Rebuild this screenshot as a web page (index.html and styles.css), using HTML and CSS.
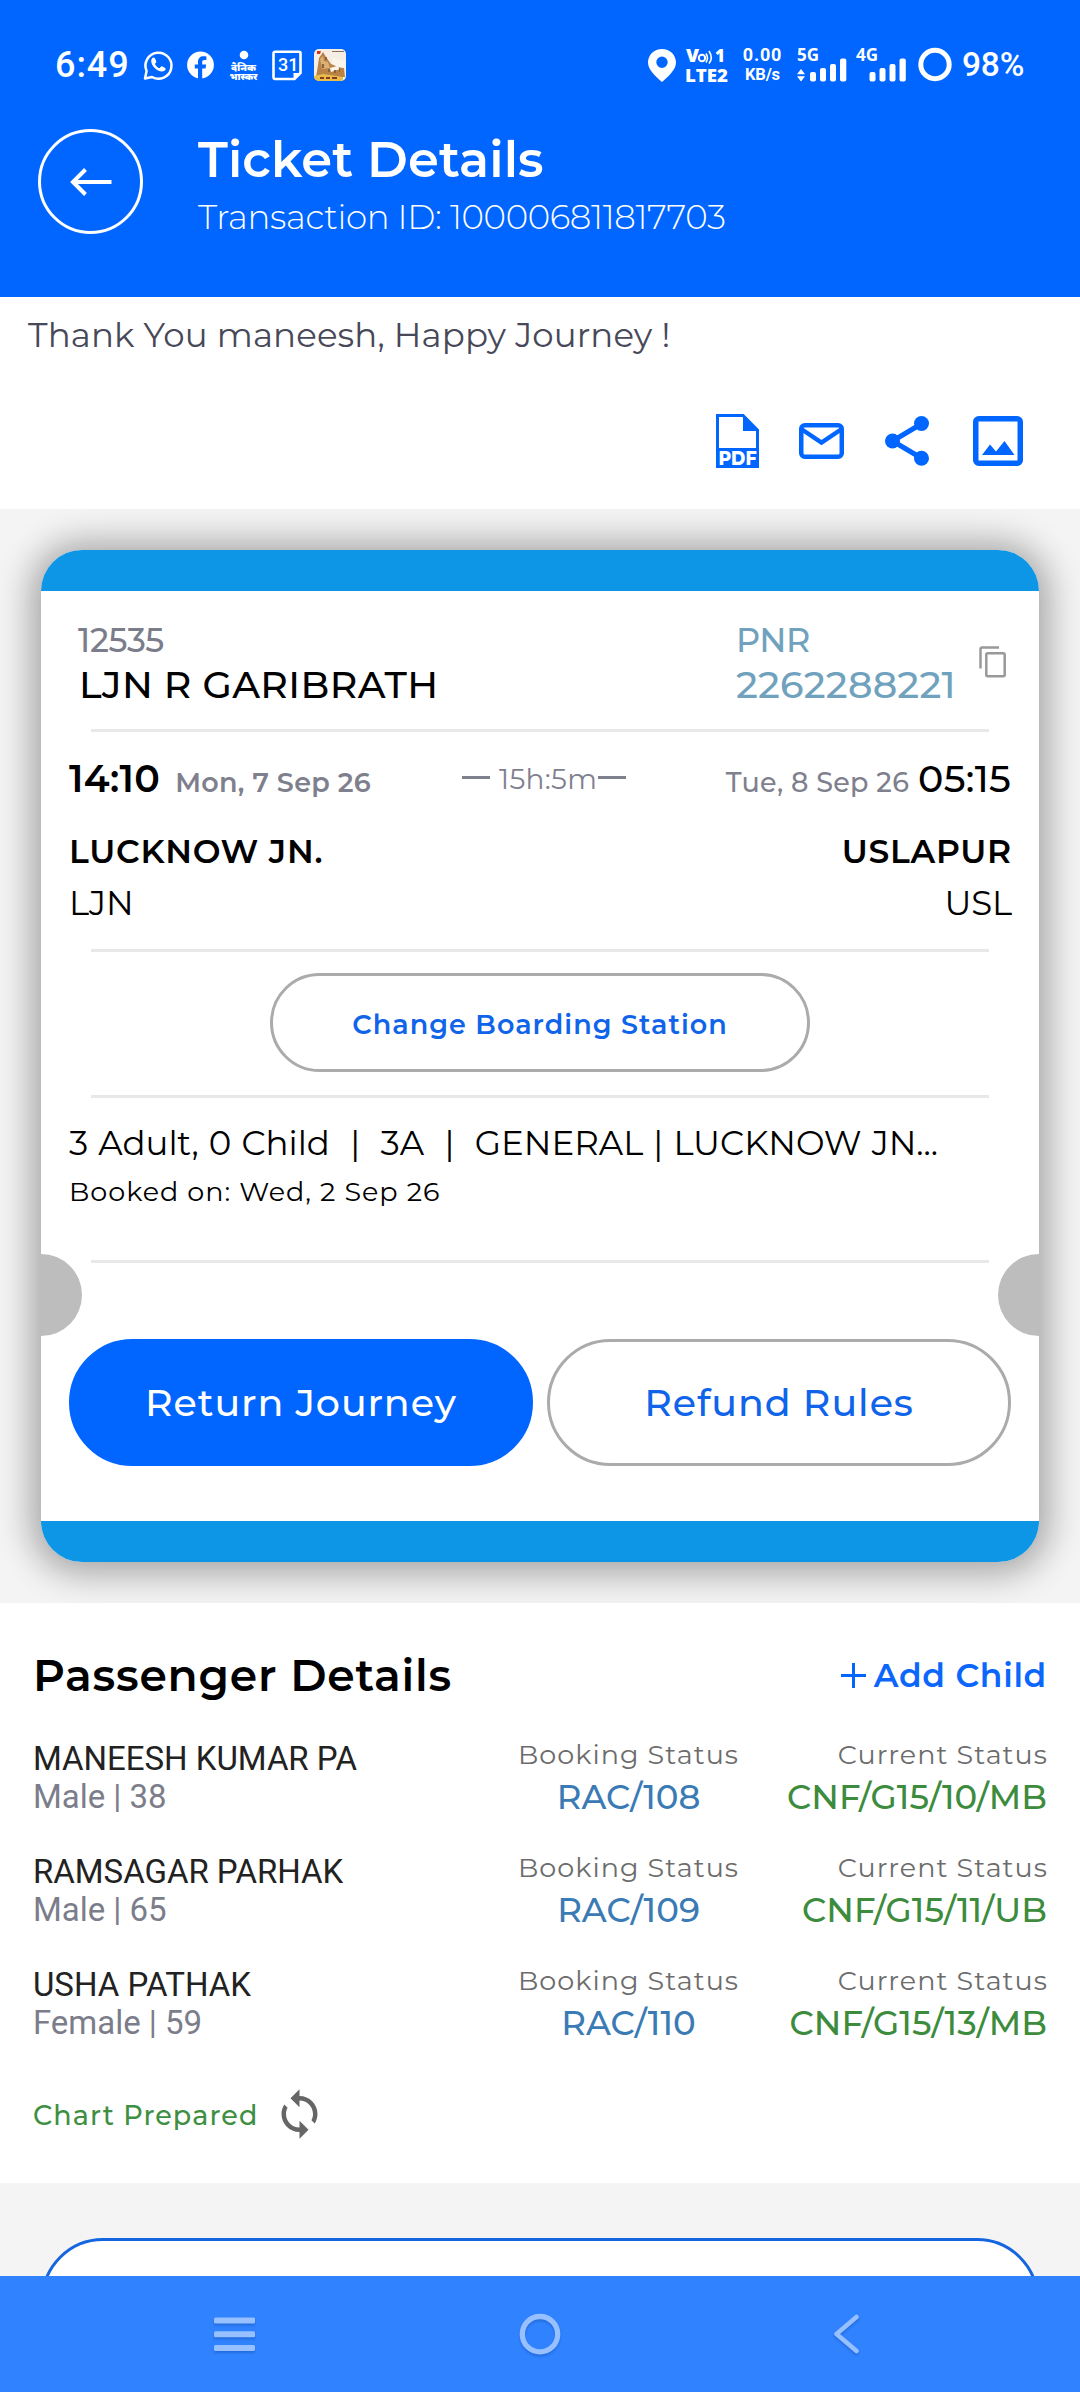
FILE: index.html
```
<!DOCTYPE html>
<html lang="en">
<head>
<meta charset="utf-8">
<title>Ticket Details</title>
<link rel="stylesheet" href="styles.css">
</head>
<body>
<div class="screen">
  <header class="header">
    <div class="status">
      <div class="status-left">
        <span class="clock">6:49</span>
        <svg class="s-wa" width="30" height="34" viewBox="0 0 30 34"><path d="M2 30.500 3.600 23A13 13 0 1 1 9 29Z" fill="none" stroke="#fff" stroke-width="2.500" stroke-linejoin="round"/><path d="M10.600 9.500c-1 0-2.400 1.400-2.400 3.500 0 4.800 6 10.600 10.600 10.600 2.300 0 3.900-1.300 3.900-2.800 0-.8-3.600-2.800-4.300-2.600-.8.300-1.200 1.900-2 1.900-1.200 0-4.400-3.200-4.400-4.200 0-.7 1.300-1.200 1.300-2 0-.8-1.200-4.400-2.700-4.400Z" fill="#fff"/></svg>
        <svg class="s-fb" width="27" height="34" viewBox="0 0 27 34"><circle cx="13.500" cy="17" r="13.400" fill="#fff"/><path d="M11 31V20.500H7.800v-4H11v-2.600c0-3.900 2.200-5.700 5.400-5.700 1.200 0 2.300.1 3 .3v3.400h-2c-1.700 0-2.200.9-2.200 2.200v2.400h4l-.7 4h-3.300V31Z" fill="#0066ff"/></svg>
        <svg class="s-news" width="29" height="36" viewBox="0 0 29 36"><circle cx="15" cy="7" r="4.300" fill="#fff"/><text class="news-text" x="2" y="23" textLength="25" lengthAdjust="spacingAndGlyphs">दैनिक</text><text class="news-text" x="0.500" y="32" textLength="28" lengthAdjust="spacingAndGlyphs">भास्कर</text></svg>
        <svg class="s-cal" width="30" height="34" viewBox="0 0 30 34"><path d="M3 3.700h24a1.500 1.500 0 0 1 1.500 1.500V25l-6 6H3a1.500 1.500 0 0 1-1.500-1.500V5.200A1.500 1.500 0 0 1 3 3.700Z" fill="none" stroke="#fff" stroke-width="2.600"/><path d="M21.500 31v-6h7Z" fill="#fff"/><text class="cal-text" x="6" y="23">31</text></svg>
        <svg class="s-pic" width="32" height="34" viewBox="0 0 32 34"><clipPath id="thumb"><rect y="1" width="32" height="32" rx="5"/></clipPath><g clip-path="url(#thumb)"><path fill="#f6eee4" d="M0 0h32v34H0z"/><path fill="#b98247" d="m5 10 4-6 3 5 5 7 5 2 8 2 1 9H2l2-12Z"/><path fill="#d9b078" d="m6 11 3-3 1 5 4 1 2 6-8 1Z"/><path fill="#fbf4ea" d="m19 10 12 3v7l-8-1-5-4ZM16 20l7-2 3 3-9 3Z"/><path fill="#cf3421" d="M3 3h4L6 6H3Z"/><path fill="#8b6138" d="M11 9h2v3h-2zM8 16h2v4H8zM14 21h2v3h-2zM25 20h1v4h-1zM20 22h2v3h-2z"/><path fill="#e9bd4c" d="M0 28l9-2 20 3v5H0z"/><path fill="#8a3a1c" d="M6 29h4v2H6zM12 29h4v2h-4zM18 29h5v2h-5z"/><path stroke="#8a705c" d="M18 3.500h12"/></g></svg>
      </div>
      <div class="status-right">
        <svg class="s-pin" width="28" height="34" viewBox="0 0 28 34"><path fill="#fff" fill-rule="evenodd" d="M14 1C6.300 1 0 6.800 0 14.500 0 22 8 28.500 14 34c6-5.500 14-12 14-19.500C28 6.800 21.700 1 14 1Zm0 7.500a5.700 5.700 0 1 1 0 11.400 5.700 5.700 0 0 1 0-11.400Z"/></svg>
        <svg class="s-volte" width="43" height="40" viewBox="0 0 43 40"><text class="tiny heavy" x="1" y="14" textLength="13" lengthAdjust="spacingAndGlyphs">V</text><circle cx="17" cy="10" r="3.200" fill="none" stroke="#fff" stroke-width="2"/><path d="M21 5.500q3 4.500 0 9M24 3q4.500 7 0 12.500" fill="none" stroke="#fff" stroke-width="1.600"/><text class="tiny heavy" x="30" y="14">1</text><text class="tiny heavy" x="0" y="34" textLength="43" lengthAdjust="spacingAndGlyphs">LTE2</text></svg>
        <div class="speed"><span class="speed-num">0.00</span><span class="speed-unit">KB/s</span></div>
        <svg class="s-sig" width="51" height="34" viewBox="0 0 51 34"><text class="tiny" x="0" y="13" textLength="22" lengthAdjust="spacingAndGlyphs">5G</text><path fill="#fff" d="M0 26.300h8L4 21ZM0 28.200h8L4 33.500Z"/><rect x="13" y="24" width="6" height="9.500" rx="2" fill="#fff"/><rect x="23" y="20" width="6" height="13.500" rx="2" fill="#fff"/><rect x="33" y="16" width="6" height="17.500" rx="2" fill="#fff"/><rect x="43" y="10.500" width="6.300" height="23" rx="2" fill="#fff"/></svg>
        <svg class="s-sig2" width="51" height="34" viewBox="0 0 51 34"><text class="tiny" x="0" y="13" textLength="22" lengthAdjust="spacingAndGlyphs">4G</text><rect x="13.500" y="24" width="6" height="9.500" rx="2" fill="#fff"/><rect x="23.500" y="20" width="6" height="13.500" rx="2" fill="#fff"/><rect x="33.500" y="16" width="6" height="17.500" rx="2" fill="#fff"/><rect x="43.500" y="10.500" width="6.300" height="23" rx="2" fill="#fff"/></svg>
        <svg class="s-ring" width="34" height="34" viewBox="0 0 34 34"><circle cx="17" cy="16.500" r="14.200" fill="none" stroke="#fff" stroke-width="5"/></svg>
        <span class="battery">98%</span>
      </div>
    </div>
    <div class="title-row">
      <button class="back" aria-label="Back"><svg width="42" height="28" viewBox="0 0 42 28"><path d="M15.500 1.500 3 14l12.500 12.500M3 14h38.500" fill="none" stroke="#fff" stroke-width="4"/></svg></button>
      <div class="titles">
        <h1 class="title">Ticket Details</h1>
        <p class="txn">Transaction ID: 100006811817703</p>
      </div>
    </div>
  </header>

  <section class="greeting">
    <p class="thanks">Thank You maneesh, Happy Journey !</p>
    <div class="actions">
      <svg class="a-pdf" width="43" height="54" viewBox="0 0 43 54"><path d="M1.500 53V1.500h25.500L41.500 16v37" fill="none" stroke="#0066ff" stroke-width="3"/><path fill="#0066ff" d="M27 0v17h16ZM0 34h43v20H0z"/><text class="pdf-text" x="2.500" y="50.500" textLength="38" lengthAdjust="spacingAndGlyphs">PDF</text></svg>
      <svg class="a-mail" width="45" height="36" viewBox="0 0 45 36"><rect x="2.250" y="2.250" width="40.500" height="31.500" rx="3.500" fill="none" stroke="#0066ff" stroke-width="4.500"/><path d="m3 6.500 19.500 13 19.500-13" fill="none" stroke="#0066ff" stroke-width="4.500"/></svg>
      <svg class="a-share" width="44" height="50" viewBox="0 0 44 50"><path d="M37 7.500 7.500 25 37 42.500" fill="none" stroke="#0066ff" stroke-width="5"/><g fill="#0066ff"><circle cx="36.500" cy="7.500" r="7.500"/><circle cx="7.500" cy="25" r="7.500"/><circle cx="36.500" cy="42.300" r="7.500"/></g></svg>
      <svg class="a-image" width="50" height="50" viewBox="0 0 50 50"><rect x="2.750" y="2.750" width="44.500" height="44.500" rx="3" fill="none" stroke="#0066ff" stroke-width="5.500"/><path fill="#0066ff" d="m9 39 8-10.500 6 7 8.500-10.500L41.500 39Z"/></svg>
    </div>
  </section>

  <section class="ticket-wrap">
    <article class="ticket">
      <div class="strip strip-top"></div>
      <div class="ticket-body">
        <div class="train">
          <div class="train-name"><span class="no">12535</span><span class="name">LJN R GARIBRATH</span></div>
          <div class="pnr"><span class="pnr-label">PNR</span><span class="pnr-no">2262288221</span></div>
          <svg class="copy" width="27" height="32" viewBox="0 0 27 32"><path d="M1.500 22.500V3a1.500 1.500 0 0 1 1.500-1.500h17" fill="none" stroke="#999" stroke-width="2.500"/><rect x="7.300" y="7.300" width="18.400" height="23" rx="1.500" fill="none" stroke="#999" stroke-width="2.500"/></svg>
        </div>
        <hr class="rule rule-a">
        <div class="times">
          <div class="dep"><span class="time bold">14:10</span><span class="date bold">Mon, 7 Sep 26</span></div>
          <div class="dur"><i class="dash"></i><span class="dur-text">15h:5m</span><i class="dash"></i></div>
          <div class="arr"><span class="date">Tue, 8 Sep 26</span><span class="time">05:15</span></div>
        </div>
        <div class="stations"><span>LUCKNOW JN.</span><span>USLAPUR</span></div>
        <div class="codes"><span>LJN</span><span>USL</span></div>
        <hr class="rule rule-b">
        <button class="pill change">Change Boarding Station</button>
        <hr class="rule rule-c">
        <p class="quota">3 Adult, 0 Child&nbsp; |&nbsp; 3A&nbsp; |&nbsp; GENERAL | LUCKNOW JN...</p>
        <p class="booked">Booked on: Wed, 2 Sep 26</p>
        <hr class="rule rule-d">
        <div class="buttons">
          <button class="pill big primary">Return Journey</button>
          <button class="pill big">Refund Rules</button>
        </div>
      </div>
      <div class="strip strip-bottom"></div>
      <i class="notch notch-left"></i><i class="notch notch-right"></i>
    </article>
  </section>

  <section class="passengers">
    <div class="p-head">
      <h2 class="p-title">Passenger Details</h2>
      <div class="add"><svg width="25" height="25" viewBox="0 0 25 25"><path d="M12.500 0v25M0 12.500h25" stroke="#0066ff" stroke-width="3"/></svg><span>Add Child</span></div>
    </div>
    <div class="p-row">
      <div class="who"><span class="p-name">MANEESH KUMAR PA</span><span class="p-meta">Male | 38</span></div>
      <div class="booking"><span class="label">Booking Status</span><span class="rac">RAC/108</span></div>
      <div class="current"><span class="label">Current Status</span><span class="cnf">CNF/G15/10/MB</span></div>
    </div>
    <div class="p-row">
      <div class="who"><span class="p-name">RAMSAGAR PARHAK</span><span class="p-meta">Male | 65</span></div>
      <div class="booking"><span class="label">Booking Status</span><span class="rac">RAC/109</span></div>
      <div class="current"><span class="label">Current Status</span><span class="cnf">CNF/G15/11/UB</span></div>
    </div>
    <div class="p-row">
      <div class="who"><span class="p-name">USHA PATHAK</span><span class="p-meta">Female | 59</span></div>
      <div class="booking"><span class="label">Booking Status</span><span class="rac">RAC/110</span></div>
      <div class="current"><span class="label">Current Status</span><span class="cnf">CNF/G15/13/MB</span></div>
    </div>
    <div class="chart"><span>Chart Prepared</span>
      <svg width="55" height="54" viewBox="0 0 24 24"><path fill="#666" d="M12 4V1L8 5l4 4V6c3.310 0 6 2.690 6 6 0 1.010-.25 1.970-.7 2.800l1.460 1.460C19.540 15.030 20 13.570 20 12c0-4.420-3.580-8-8-8zm0 14c-3.310 0-6-2.690-6-6 0-1.010.25-1.970.7-2.800L5.240 7.740C4.460 8.970 4 10.430 4 12c0 4.420 3.580 8 8 8v3l4-4-4-4v3z"/></svg>
    </div>
  </section>

  <section class="more"><div class="more-card"></div></section>

  <nav class="nav">
    <svg width="41" height="44" viewBox="0 0 41 44"><g fill="#96c0ff"><rect y="5.500" width="41" height="6" rx="1.500"/><rect y="19.200" width="41" height="6" rx="1.500"/><rect y="33" width="41" height="6" rx="1.500"/></g></svg>
    <svg class="nav-home" width="42" height="44" viewBox="0 0 42 44"><circle cx="21" cy="22.200" r="17.700" fill="none" stroke="#96c0ff" stroke-width="5.300"/></svg>
    <svg class="nav-back" width="26" height="44" viewBox="0 0 26 44"><path d="M23.500 5 3.500 22l20 17" fill="none" stroke="#96c0ff" stroke-width="4.500" stroke-linecap="round" stroke-linejoin="round"/></svg>
  </nav>
</div>
</body>
</html>
```
FILE: styles.css
```
* { box-sizing: border-box; }
body { margin: 0; background: #fff; font-family: Montserrat, Inter, sans-serif; color: #000; }
h1, h2, p { margin: 0; font-weight: 400; }
svg { display: block; flex: none; overflow: visible; }
span { white-space: nowrap; }
button { font-family: inherit; padding: 0; margin: 0; background: none; }

.screen { width: 1080px; height: 2392px; overflow: hidden; display: flex; flex-direction: column; }

/* header and status bar */
.header { flex: none; height: 297px; background: #0066ff; color: #fff; }
.status { height: 129px; display: flex; justify-content: space-between; font-family: Roboto, sans-serif; }
.status-left, .status-right { display: flex; align-items: flex-start; padding-top: 48px; }
.status-left { padding-left: 55px; }
.status-right { width: 432px; }
.clock { width: 88px; font-size: 36px; font-weight: 500; line-height: 34px; letter-spacing: 0.95px; }
.s-fb { margin-left: 14px; }
.s-news { margin-left: 15px; }
.s-cal { margin-left: 14px; }
.s-pic { margin-left: 12px; }
.news-text { font: 900 9.500px "Noto Sans Devanagari", "Noto Sans", sans-serif; fill: #fff; }
.cal-text { font: 500 18px Roboto, sans-serif; fill: #fff; }
.tiny { font: 700 17px "Open Sans", sans-serif; fill: #fff; }
.heavy { font-weight: 800; }
.s-volte { margin-left: 9px; }
.speed { width: 39px; margin-left: 15px; display: flex; flex-direction: column; align-items: center; font-weight: 700; }
.speed-num { font-size: 18px; line-height: 22px; margin-top: -4px; letter-spacing: 0.8px; }
.speed-unit { font-size: 16.500px; line-height: 20px; margin-top: -1px; letter-spacing: -0.2px; }
.s-sig { margin-left: 15px; }
.s-sig2 { margin-left: 8px; }
.s-ring { margin-left: 11px; }
.battery { margin-left: 10px; font-size: 33.500px; font-weight: 500; line-height: 34px; letter-spacing: -0.2px; }

.title-row { display: flex; }
.back { flex: none; width: 105px; height: 105px; margin-left: 38px; border: 3px solid #fff; border-radius: 50%; display: flex; align-items: center; justify-content: center; padding-top: 1px; }
.titles { margin-left: 55px; }
.title { font-size: 49.500px; font-weight: 600; line-height: 60px; letter-spacing: 0.100px; }
.txn { font-size: 34px; font-weight: 300; line-height: 44px; letter-spacing: -0.34px; margin-top: 6px; }

/* greeting and actions */
.greeting { flex: none; height: 212px; padding-top: 16px; }
.thanks { padding-left: 28px; font-size: 34px; line-height: 44px; letter-spacing: 0.13px; color: #474858; }
.actions { height: 54px; margin-top: 57px; padding-left: 716px; display: flex; align-items: center; }
.a-mail { margin-left: 40px; }
.a-share { margin-left: 41px; }
.a-image { margin-left: 44px; }
.pdf-text { font: 800 19px Montserrat, sans-serif; fill: #fff; }

/* ticket card */
.ticket-wrap { flex: none; height: 1094px; padding: 41px; background: #f4f4f4; overflow: hidden; }
.ticket { position: relative; height: 1012px; border-radius: 41px; background: #fff; display: flex; flex-direction: column; box-shadow: 0 2px 34px 10px rgba(0, 0, 0, 0.32); }
.strip { flex: none; height: 41px; background: #0d96e6; }
.strip-top { border-radius: 41px 41px 0 0; }
.strip-bottom { border-radius: 0 0 41px 41px; }
.ticket-body { height: 930px; padding: 0 28px; }
.notch { position: absolute; top: 704px; width: 41px; height: 82px; background: #bdbdbd; }
.notch-left { left: 0; border-radius: 0 41px 41px 0; }
.notch-right { right: 0; border-radius: 41px 0 0 41px; }

.rule { height: 3px; border: 0; margin: 0 22px; background: #e8e8e8; }
.rule-a { margin-top: 22px; }
.rule-b { margin-top: 24px; }
.rule-c { margin-top: 23px; }
.rule-d { margin-top: 50px; }

.train { display: flex; padding-top: 27px; }
.train-name { width: 659px; padding-left: 9px; display: flex; flex-direction: column; }
.no { font-size: 33px; font-weight: 500; line-height: 44px; letter-spacing: -0.3px; color: #7b7d8a; }
.name { margin: 1px 0 0 1px; font-size: 38px; font-weight: 500; line-height: 44px; letter-spacing: 0.38px; }
.pnr { width: 251px; padding-left: 8px; display: flex; flex-direction: column; color: #70a1bd; font-weight: 500; }
.pnr-label { font-size: 33.500px; line-height: 44px; letter-spacing: -0.5px; }
.pnr-no { margin-top: 1px; font-size: 38px; line-height: 44px; letter-spacing: 0.25px; }
.copy { margin-top: 28px; }

.times { height: 40px; margin-top: 27px; display: grid; grid-template-columns: 393px 1fr auto; line-height: 40px; }
.dep, .arr { height: 40px; display: flex; align-items: baseline; }
.time { font-size: 38px; font-weight: 500; letter-spacing: 0.25px; }
.date { font-size: 27px; font-weight: 500; letter-spacing: 0.3px; color: #7f808e; }
.bold { font-weight: 600; }
.dep .date { margin-left: 15px; }
.arr .time { margin-left: 9px; }
.dur { height: 40px; display: flex; align-items: center; color: #7f808e; }
.dur-text { font-size: 28px; letter-spacing: 0.3px; margin: 0 1px 0 9px; line-height: 38px; }
.dash { width: 28px; height: 3px; margin-bottom: 4px; background: #7f808e; }
.stations, .codes { display: flex; justify-content: space-between; margin-right: -1px; line-height: 44px; }
.stations { margin-top: 30px; font-size: 33px; font-weight: 600; letter-spacing: 0.75px; }
.codes { margin-top: 8px; font-size: 34px; font-weight: 400; letter-spacing: -0.100px; }

.pill { display: flex; align-items: center; justify-content: center; border: 3px solid #ababab; color: #0f64ea; }
.change { width: 540px; height: 99px; margin: 21px auto 0; padding-top: 4px; border-radius: 50px; font-size: 27px; font-weight: 600; letter-spacing: 1.040px; }
.quota { margin-top: 23px; font-size: 34px; line-height: 44px; word-spacing: 1.250px; white-space: nowrap; }
.booked { margin-top: 9px; font-size: 27px; line-height: 36px; letter-spacing: 0.980px; }
.buttons { margin-top: 76px; display: grid; grid-template-columns: 1fr 1fr; gap: 14px; }
.big { height: 127px; border-radius: 64px; font-size: 38px; font-weight: 500; letter-spacing: 0.950px; }
.primary { background: #0066ff; border-color: #0066ff; color: #fff; }

/* passengers */
.passengers { flex: none; height: 580px; padding: 42px 33px 0 34px; background: #fff; }
.p-head { display: flex; justify-content: space-between; margin-bottom: 29px; line-height: 60px; }
.p-title { font-size: 44px; font-weight: 600; letter-spacing: 0.780px; margin-left: -1px; }
.add { display: flex; align-items: center; gap: 8px; font-size: 33px; font-weight: 600; letter-spacing: 0.700px; color: #0b66fb; }
.p-row { height: 113px; display: grid; grid-template-columns: 466px 257px 1fr; }
.who, .booking, .current { display: flex; flex-direction: column; }
.who { padding-top: 6px; font: 400 33px/38px Roboto, sans-serif; letter-spacing: -0.030px; margin-left: -1px; }
.p-name { color: #222; }
.p-meta { color: #7b7d8a; }
.booking { align-items: center; }
.current { align-items: flex-end; }
.label { font-size: 27px; line-height: 42px; letter-spacing: 1.030px; color: #6c6c6c; }
.current .label { margin-right: -1px; }
.rac, .cnf { font-size: 34px; font-weight: 500; line-height: 42px; }
.rac { color: #3b7bb5; }
.cnf { color: #3d8b3d; letter-spacing: 0.050px; }
.chart { display: flex; align-items: center; height: 54px; margin-top: 14px; font-size: 27px; font-weight: 500; letter-spacing: 1.100px; color: #3f8f43; }
.chart span { margin: 3px 0 0 -1px; }
.chart svg { margin-left: 14px; }

/* next card and system navigation */
.more { flex: none; height: 93px; padding: 55px 41px 0; background: #f4f4f4; overflow: hidden; }
.more-card { height: 200px; border: 3px solid #1565e0; border-radius: 62px; background: #fff; }
.nav { flex: none; height: 116px; padding-left: 214px; background: #3082ff; display: flex; align-items: center; }
.nav-home { margin-left: 264px; }
.nav-back { margin-left: 272px; }
.nav svg { filter: drop-shadow(0 2px 1px rgba(0, 40, 120, 0.25)); }
```
